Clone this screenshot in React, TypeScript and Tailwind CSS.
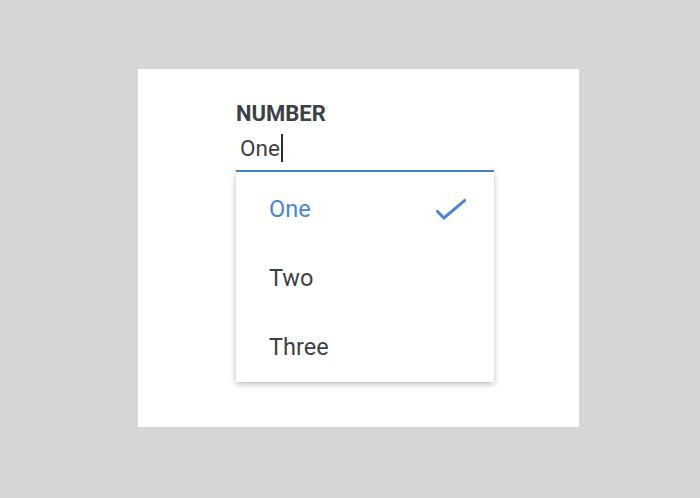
import { useState } from "react";

type Option = {
  id: number;
  label: string;
};

const options: Option[] = [
  { id: 1, label: "One" },
  { id: 2, label: "Two" },
  { id: 3, label: "Three" },
];

const CheckIcon = () => (
  <svg width="30" height="24" viewBox="0 0 30 24" fill="none">
    <polyline
      points="1.5,13.5 8,20 28.5,2.5"
      stroke="#4a84d6"
      strokeWidth="3"
      strokeLinecap="square"
    />
  </svg>
);

const App = () => {
  const [selected] = useState<number>(1);

  return (
    <div
      className="w-full h-[498px] bg-[#d6d6d6] pt-[69px] pl-[138px]"
      style={{ fontFamily: "Roboto, 'Liberation Sans', sans-serif" }}
    >
      <div className="w-[441px] h-[358px] bg-white pl-[98px] pt-[32px]">
        <div className="w-[258px] flex flex-col">
          <label className="text-[22px] leading-[26px] font-bold text-[#3c4146]">
            NUMBER
          </label>
          <div className="mt-[7px] pl-[4px] pb-[8px] border-b-2 border-[#4a84d6] flex items-center">
            <span className="text-[22.5px] leading-[28px] text-[#3c4146]">One</span>
            <span className="w-[2px] h-[28px] bg-[#2b2f33] ml-[1px]" />
          </div>
          <div className="bg-white shadow-[0_2px_6px_rgba(0,0,0,0.28)] pt-[3px]">
            {options.map((option) => (
              <div
                key={option.id}
                className="h-[69px] pl-[33px] pr-[28px] flex items-center justify-between"
              >
                <span
                  className={
                    option.id === selected
                      ? "text-[23.5px] text-[#4a84d6]"
                      : "text-[23.5px] text-[#3c4146]"
                  }
                >
                  {option.label}
                </span>
                {option.id === selected && <CheckIcon />}
              </div>
            ))}
          </div>
        </div>
      </div>
    </div>
  );
};

export default App;
